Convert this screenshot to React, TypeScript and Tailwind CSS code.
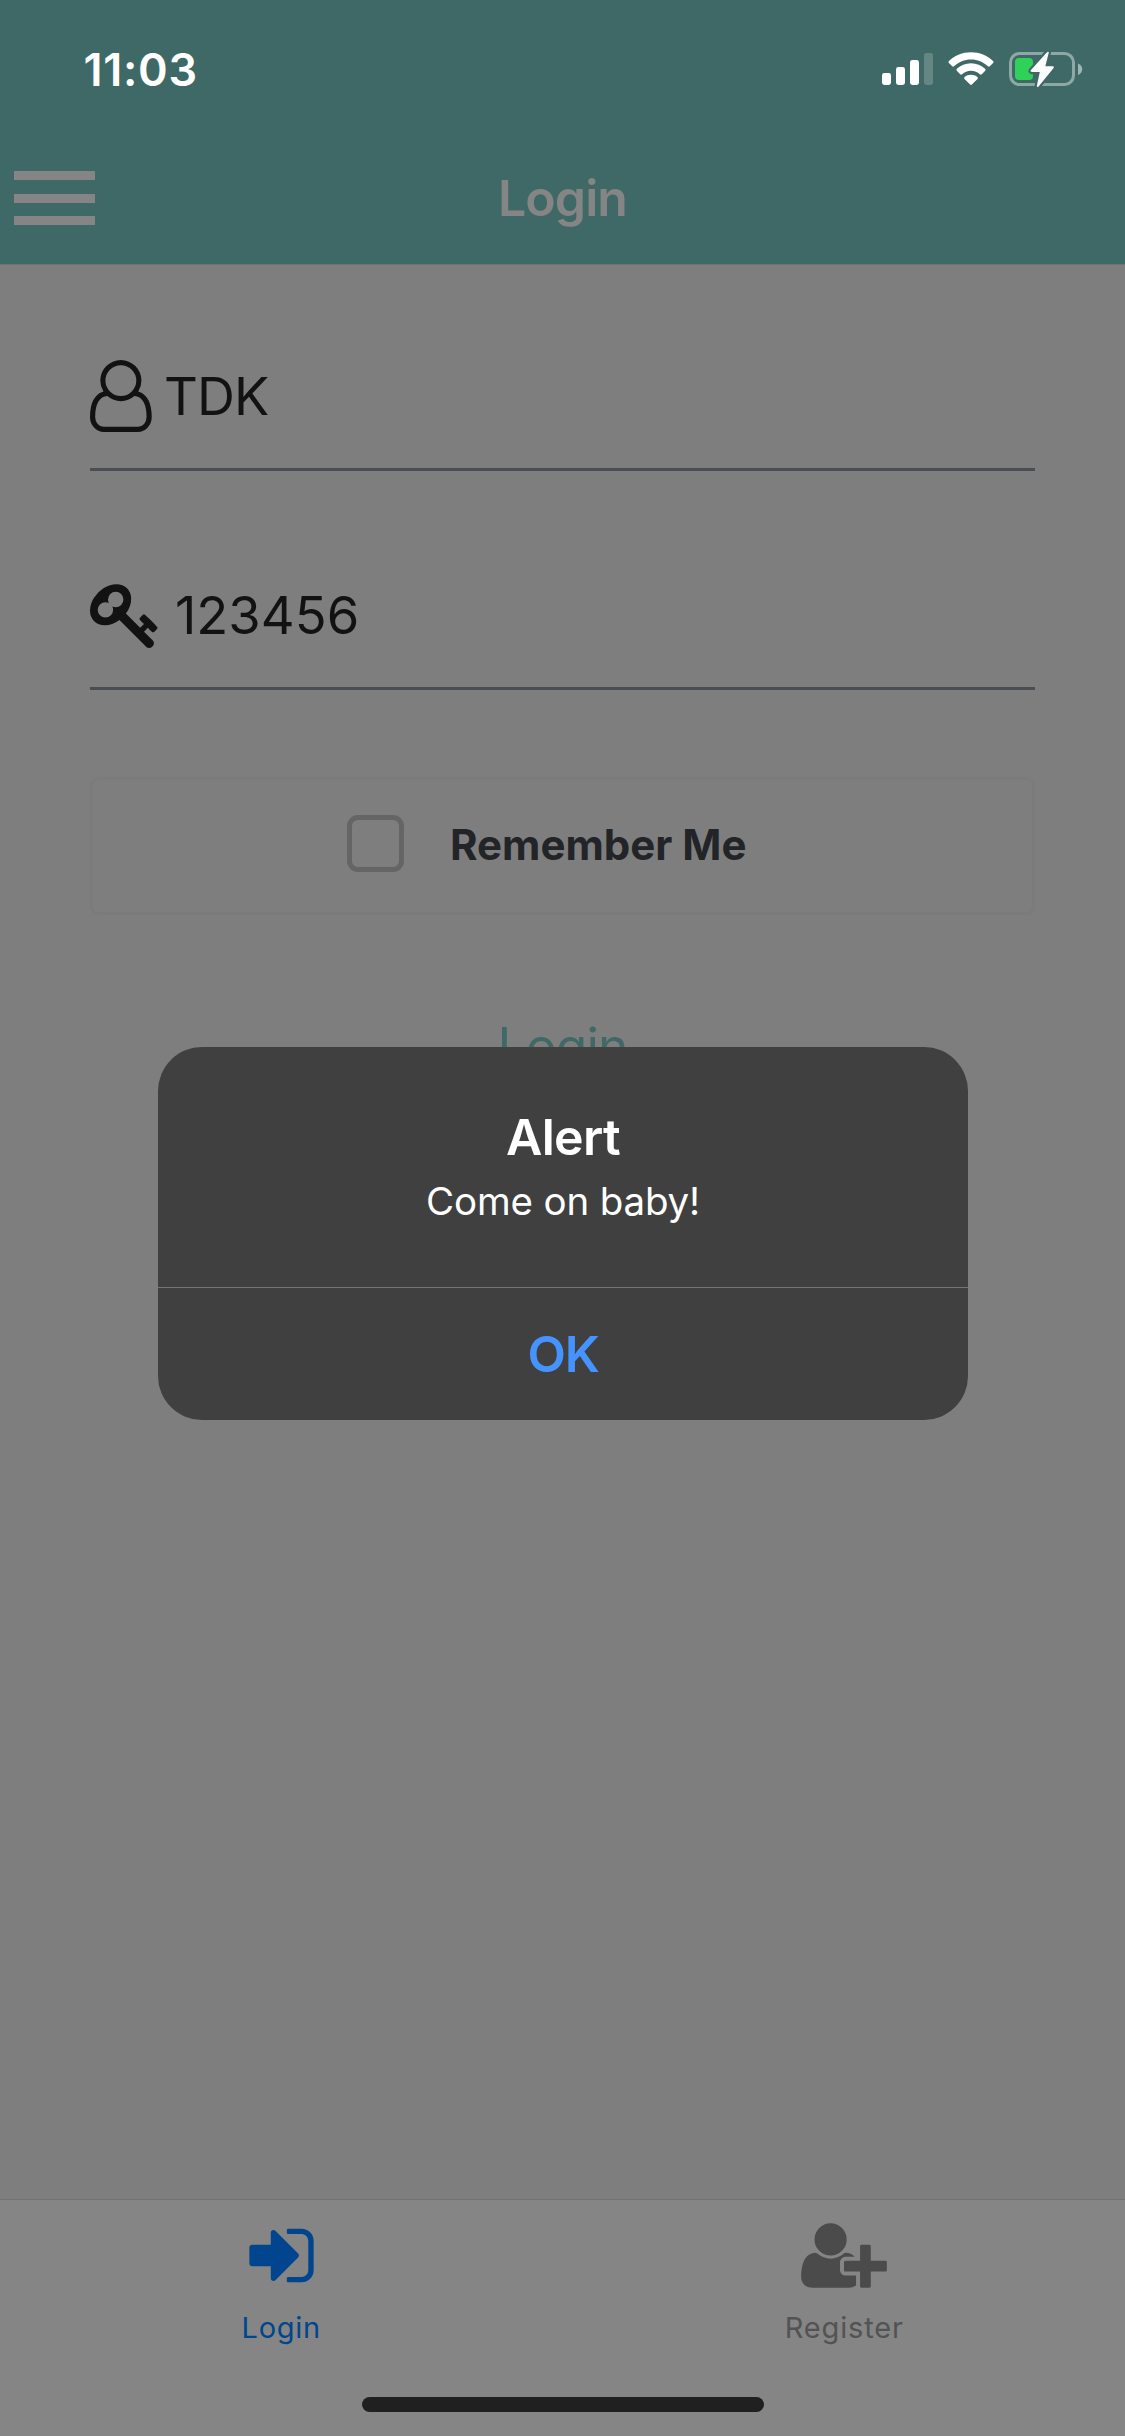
import type { ReactNode } from "react";

function SignalIcon() {
  return (
    <svg className="h-[34px] w-[52px]" viewBox="0 0 52 34" fill="#fff">
      <rect x="0" y="21" width="9" height="12" rx="2.4" />
      <rect x="14" y="15" width="9" height="18" rx="2.4" />
      <rect x="28" y="8" width="9" height="25" rx="2.4" />
      <rect x="42" y="1" width="9" height="32" rx="2.4" opacity="0.2" />
    </svg>
  );
}

function WifiIcon() {
  return (
    <svg className="h-[34px] w-[46px]" viewBox="0 0 46 34" fill="#fff">
      <path d="M23 .2c8.500 0 16.200 3.300 22 8.700q1.100 1 .1 2l-3.300 3.400q-.9.900-1.900 0C35.300 10.100 29.500 7.600 23 7.600S10.700 10.100 6.100 14.300q-1 .9-1.900 0L.9 10.900q-1-1 .1-2C6.800 3.500 14.500.2 23 .2z" />
      <path d="M23 11.300c5.500 0 10.400 2.100 14.100 5.500q1.100 1 .1 2l-3.400 3.400q-.9.900-1.900 0c-2.400-2.100-5.500-3.400-8.900-3.400s-6.500 1.300-8.900 3.400q-1 .9-1.900 0l-3.400-3.400q-1-1 .1-2c3.700-3.400 8.600-5.500 14.100-5.500z" />
      <path d="M23 22.800c2.500 0 4.700.8 6.400 2.300q1 .9.100 1.800l-5.600 5.600q-.9.900-1.800 0l-5.600-5.600q-.9-.9.100-1.800c1.700-1.500 3.900-2.300 6.400-2.300z" />
    </svg>
  );
}

function BatteryIcon() {
  const bolt = "M38.600 0c.8-.5 1.400.1 1.100 1L36.300 14.300H43.400c1.400 0 1.800.9 1 1.900L29.600 34.400c-1 1.100-2 .6-1.700-.8L30.800 20H23c-1.400 0-1.800-.9-1-1.900L37.300.900z";
  return (
    <svg className="h-[36px] w-[74px]" viewBox="0 -1 74 36">
      <rect x="1.500" y="1.500" width="63" height="31" rx="9" fill="none" stroke="#fff" strokeOpacity="0.42" strokeWidth="3" />
      <path d="M69 11.500c2.700 1 4.200 3.100 4.200 5.700S71.700 21.900 69 22.900z" fill="#fff" fillOpacity="0.5" />
      <rect x="6" y="6" width="18" height="22" rx="4" fill="#30d158" />
      <path d={bolt} fill="#3f6966" stroke="#3f6966" strokeWidth="4.500" />
      <path d={bolt} fill="#fff" />
    </svg>
  );
}

function UserOutlineIcon() {
  return (
    <svg className="h-[72px] w-[62px]" viewBox="0 0 1543 1792" fill="#121212">
      <path d="M1201 784q47 14 89.500 38t89 73 79.500 115.500 55 172 22 236.500q0 154-100 263.500t-241 109.500h-854q-141 0-241-109.500t-100-263.500q0-131 22-236.500t55-172 79.500-115.500 89-73 89.500-38q-79-125-79-272 0-104 40.500-198.500t109.500-163.500 163.500-109.500 198.500-40.500 198.500 40.500 163.500 109.500 109.500 163.500 40.500 198.500q0 147-79 272zm-433-656q-159 0-271.500 112.500t-112.500 271.500 112.500 271.500 271.500 112.500 271.500-112.500 112.500-271.500-112.500-271.500-271.500-112.500zm427 1536q88 0 150.500-71.500t62.500-173.500q0-239-78.500-377t-225.500-145q-145 127-336 127t-336-127q-147 7-225.500 145t-78.500 377q0 102 62.500 173.500t150.500 71.500h854z" />
    </svg>
  );
}

function KeyIcon() {
  return (
    <svg className="size-[72px]" viewBox="0 0 1792 1792" fill="#121212">
      <path d="M832 512q0-80-56-136t-136-56-136 56-56 136q0 42 19 83-41-19-83-19-80 0-136 56t-56 136 56 136 136 56 136-56 56-136q0-42-19-83 41 19 83 19 80 0 136-56t56-136zm851 704q0 17-49 66t-66 49q-9 0-28.500-16t-36.500-33-38.500-40-24.500-26l-96 96 220 220q28 28 28 68 0 42-39 81t-81 39q-40 0-68-28l-671-671q-176 131-365 131-163 0-265.500-102.500t-102.500-265.500q0-160 95-313t248-248 313-95q163 0 265.500 102.500t102.500 265.500q0 189-131 365l355 355 96-96q-3-3-26-24.500t-40-38.500-33-36.500-16-28.500q0-17 49-66t66-49q13 0 23 10 6 6 46 44.500t82 79.500 86.500 86 73 78 28.500 41z" />
    </svg>
  );
}

function SignInIcon() {
  return (
    <svg className="size-[75px]" viewBox="0 0 1792 1792" fill="#00458d">
      <path d="M1312 896q0 26-19 45l-544 544q-19 19-45 19t-45-19-19-45v-288h-448q-26 0-45-19t-19-45v-384q0-26 19-45t45-19h448v-288q0-26 19-45t45-19 45 19l544 544q19 19 19 45zm352-352v704q0 119-84.500 203.500t-203.500 84.500h-320q-13 0-22.500-9.500t-9.500-22.500q0-4-1-20t-.5-26.500 3-23.500 10-19.500 20.500-6.500h320q66 0 113-47t47-113v-704q0-66-47-113t-113-47h-312l-11.500-1-11.500-3-8-5.500-7-9-2-13.500q0-4-1-20t-.5-26.500 3-23.500 10-19.500 20.500-6.500h320q119 0 203.500 84.500t84.500 203.500z" />
    </svg>
  );
}

function UserPlusIcon() {
  return (
    <svg className="h-[75px] w-[86px]" viewBox="0 0 2048 1792" fill="#4b4b4b">
      <path d="M704 896q-159 0-271.500-112.500t-112.500-271.500 112.500-271.500 271.500-112.500 271.500 112.500 112.500 271.500-112.500 271.500-271.500 112.500zm960 128h352q13 0 22.500 9.500t9.500 22.500v192q0 13-9.500 22.500t-22.500 9.500h-352v352q0 13-9.500 22.500t-22.500 9.500h-192q-13 0-22.500-9.500t-9.500-22.500v-352h-352q-13 0-22.500-9.500t-9.500-22.500v-192q0-13 9.500-22.500t22.500-9.500h352v-352q0-13 9.500-22.500t22.500-9.500h192q13 0 22.500 9.500t9.500 22.500v352zm-736 224q0 52 38 90t90 38h256v238q-68 50-171 50h-874q-121 0-194-69t-73-190q0-53 3.500-103.500t14-109 26.500-108.500 43-97.500 62-81 85.500-53.500 111.500-20q19 0 39 17 79 61 154.500 91.500t164.500 30.500 164.500-30.500 154.500-91.500q20-17 39-17 132 0 217 96h-223q-52 0-90 38t-38 90v192z" />
    </svg>
  );
}

function Header() {
  return (
    <header className="h-[264px] bg-[#3f6966]">
      <div className="flex h-[132px] items-center justify-between pt-[6px] pr-[42px] pl-[83.500px]">
        <span className="text-[45px] leading-none font-semibold tracking-[0.7px] text-white">11:03</span>
        <div className="flex items-center">
          <SignalIcon />
          <div className="ml-[14px]"><WifiIcon /></div>
          <div className="ml-[15px]"><BatteryIcon /></div>
        </div>
      </div>
      <div className="grid h-[132px] grid-cols-[1fr_auto_1fr] items-center">
        <button className="ml-[13.500px] flex w-[81px] flex-col gap-[13.500px]" aria-label="Menu">
          <span className="h-[9px] bg-[#858585]" />
          <span className="h-[9px] bg-[#858585]" />
          <span className="h-[9px] bg-[#858585]" />
        </button>
        <h1 className="text-[50px] leading-none font-semibold tracking-[-0.94px] text-[#858585]">Login</h1>
      </div>
    </header>
  );
}

function Field({ icon, children }: { icon: ReactNode; children: ReactNode }) {
  return (
    <div className="flex h-[147px] items-center border-b-[3px] border-[#484e53] text-[52.500px] leading-none text-[#121212]">
      {icon}
      {children}
    </div>
  );
}

function TabItem({ icon, children }: { icon: ReactNode; children: ReactNode }) {
  return (
    <div className="flex flex-1 flex-col items-center pt-[18px]">
      {icon}
      <div className="mt-[15px] text-[29px] leading-[40px]">{children}</div>
    </div>
  );
}

function AlertDialog() {
  return (
    <div className="absolute inset-0 flex items-start justify-center pt-[1047px]">
      <div role="alertdialog" className="ml-px h-[373px] w-[810px] overflow-hidden rounded-[44px] bg-[#404040] text-center">
        <div className="h-[240px] pt-[60px] text-white">
          <h2 className="text-[50px] leading-[60px] font-semibold tracking-[-0.7px]">Alert</h2>
          <p className="mt-[10px] text-[38.500px] leading-[48px] tracking-[-0.16px]">Come on baby!</p>
        </div>
        <button className="h-[133px] w-full border-t border-[#757575] text-[50px] leading-none font-semibold tracking-[-1.2px] text-[#4593ff]">
          OK
        </button>
      </div>
    </div>
  );
}

export default function App() {
  return (
    <div className="relative flex h-[2436px] w-[1125px] flex-col overflow-hidden bg-[#7e7e7e] font-['Inter',sans-serif]">
      <Header />
      <main className="flex-1 border-t border-[#727272] px-[90px] pt-[59px]">
        <Field icon={<UserOutlineIcon />}>
          <span className="ml-[12px] tracking-[-0.89px]">TDK</span>
        </Field>
        <div className="mt-[72px]">
          <Field icon={<KeyIcon />}>
            <span className="ml-[13px]">123456</span>
          </Field>
        </div>
        <label className="mt-[87px] flex h-[138px] items-center rounded-[9px] border-[3px] border-[#7b7b7b] pl-[254px]">
          <span className="mb-[5px] size-[57px] rounded-[11px] border-[5.500px] border-[#656565]" />
          <span className="mb-[2px] ml-[46px] text-[42px] leading-none font-bold text-[#232428]">Remember Me</span>
        </label>
        <div className="mt-[101px] text-center text-[51.500px] leading-[60px] tracking-[-0.9px] text-[#3f6966]">Login</div>
      </main>
      <nav className="flex h-[237px] flex-col border-t border-[#737373] bg-[#858585]">
        <div className="flex h-[197px]">
          <TabItem icon={<SignInIcon />}>
            <span className="tracking-[0.75px] text-[#00458d]">Login</span>
          </TabItem>
          <TabItem icon={<UserPlusIcon />}>
            <span className="ml-px tracking-[0.85px] text-[#535353]">Register</span>
          </TabItem>
        </div>
        <div className="mx-auto h-[15px] w-[402px] rounded-full bg-[#202020]" />
      </nav>
      <AlertDialog />
    </div>
  );
}
